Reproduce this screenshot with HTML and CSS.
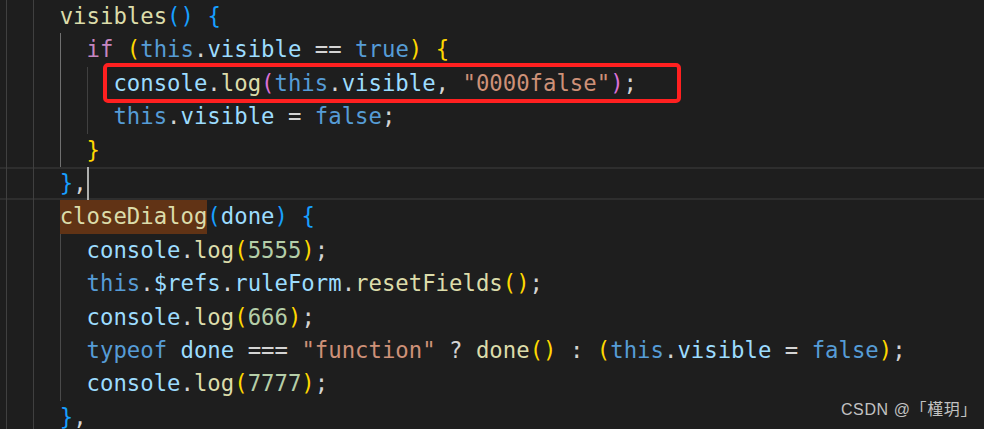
FILE: index.html
```html
<!DOCTYPE html>
<html>
<head>
<meta charset="utf-8">
<link rel="stylesheet" href="styles.css">
</head>
<body>
<div class="editor">
  <div class="code">
    <div class="ln"><span class="g"></span><span class="g"></span><span class="fn">visibles</span><span class="b3">()</span> <span class="b3">{</span></div>
    <div class="ln"><span class="g"></span><span class="g"></span><span class="g a"></span><span class="kw">if</span> <span class="b1">(</span><span class="k">this</span><span class="p">.</span><span class="v">visible</span> <span class="p">==</span> <span class="k">true</span><span class="b1">)</span> <span class="b1">{</span></div>
    <div class="ln"><span class="g"></span><span class="g"></span><span class="g a"></span><span class="g"></span><span class="box"><span class="v">console</span><span class="p">.</span><span class="fn">log</span><span class="b2">(</span><span class="k">this</span><span class="p">.</span><span class="v">visible</span><span class="p">, </span><span class="s">"0000false"</span><span class="b2">)</span><span class="p">;</span></span></div>
    <div class="ln"><span class="g"></span><span class="g"></span><span class="g a"></span><span class="g"></span><span class="k">this</span><span class="p">.</span><span class="v">visible</span> <span class="p">=</span> <span class="k">false</span><span class="p">;</span></div>
    <div class="ln"><span class="g"></span><span class="g"></span><span class="g a"></span><span class="b1">}</span></div>
    <div class="ln cur"><span class="g"></span><span class="g"></span><span class="b3">}</span><span class="p">,</span><span class="caret"></span></div>
    <div class="ln"><span class="g"></span><span class="g"></span><span class="wh fn">closeDialog</span><span class="b3">(</span><span class="v">done</span><span class="b3">)</span> <span class="b3">{</span></div>
    <div class="ln"><span class="g"></span><span class="g"></span><span class="g m"></span><span class="v">console</span><span class="p">.</span><span class="fn">log</span><span class="b1">(</span><span class="n">5555</span><span class="b1">)</span><span class="p">;</span></div>
    <div class="ln"><span class="g"></span><span class="g"></span><span class="g m"></span><span class="k">this</span><span class="p">.</span><span class="v">$refs</span><span class="p">.</span><span class="v">ruleForm</span><span class="p">.</span><span class="fn">resetFields</span><span class="b1">()</span><span class="p">;</span></div>
    <div class="ln"><span class="g"></span><span class="g"></span><span class="g m"></span><span class="v">console</span><span class="p">.</span><span class="fn">log</span><span class="b1">(</span><span class="n">666</span><span class="b1">)</span><span class="p">;</span></div>
    <div class="ln"><span class="g"></span><span class="g"></span><span class="g m"></span><span class="k">typeof</span> <span class="v">done</span> <span class="p">===</span> <span class="s">"function"</span> <span class="p">?</span> <span class="fn">done</span><span class="b1">()</span> <span class="p">:</span> <span class="b1">(</span><span class="k">this</span><span class="p">.</span><span class="v">visible</span> <span class="p">=</span> <span class="k">false</span><span class="b1">)</span><span class="p">;</span></div>
    <div class="ln"><span class="g"></span><span class="g"></span><span class="g m"></span><span class="v">console</span><span class="p">.</span><span class="fn">log</span><span class="b1">(</span><span class="n">7777</span><span class="b1">)</span><span class="p">;</span></div>
    <div class="ln"><span class="g"></span><span class="g"></span><span class="b3">}</span><span class="p">,</span></div>
  </div>
  <div class="mark">CSDN @「槿玥」</div>
</div>
</body>
</html>
```
FILE: styles.css
```css
html, body {
  margin: 0;
  padding: 0;
  background: #1e1e1e;
}
.editor {
  position: relative;
  width: 984px;
  height: 429px;
  overflow: hidden;
  background: #1e1e1e;
}
.code {
  padding-left: 6px;
  font-family: "DejaVu Sans Mono", "Liberation Mono", monospace;
  font-size: 22.3px;
  line-height: 33.4px;
  color: #d4d4d4;
}
.ln {
  height: 33.4px;
  white-space: pre;
}
.cur {
  box-shadow: inset 0 2px 0 #2e2e2e, inset 0 -2px 0 #2e2e2e;
  margin-left: -6px;
  padding-left: 6px;
}
.g {
  display: inline-block;
  vertical-align: top;
  width: 2ch;
  height: 33.4px;
  box-sizing: border-box;
  border-left: 1px solid #404040;
}
.g.a {
  border-left-color: #707070;
}
.g.m {
  border-left-color: #4a4a4a;
}
.fn { color: #dcdcaa; }
.kw { color: #c586c0; }
.k { color: #569cd6; }
.v { color: #9cdcfe; }
.p { color: #d4d4d4; }
.s { color: #ce9178; }
.n { color: #b5cea8; }
.b1 { color: #ffd700; }
.b2 { color: #da70d6; }
.b3 { color: #179fff; }
.wh {
  display: inline-block;
  vertical-align: top;
  height: 33.4px;
  background: #613315;
}
.caret {
  display: inline-block;
  vertical-align: top;
  width: 2px;
  height: 33px;
  background: #aeafad;
}
.box {
  position: relative;
  display: inline-block;
  vertical-align: top;
  height: 33.4px;
}
.box::after {
  content: "";
  position: absolute;
  left: -10px;
  right: -44px;
  top: -4px;
  bottom: -3px;
  border: 4.5px solid #ff2020;
  border-radius: 5px;
}
.mark {
  position: absolute;
  right: 7px;
  top: 400px;
  font-family: "Liberation Sans", "Noto Sans CJK SC", sans-serif;
  font-size: 16px;
  letter-spacing: 0.6px;
  line-height: 20px;
  color: #c2c2c2;
}
```
